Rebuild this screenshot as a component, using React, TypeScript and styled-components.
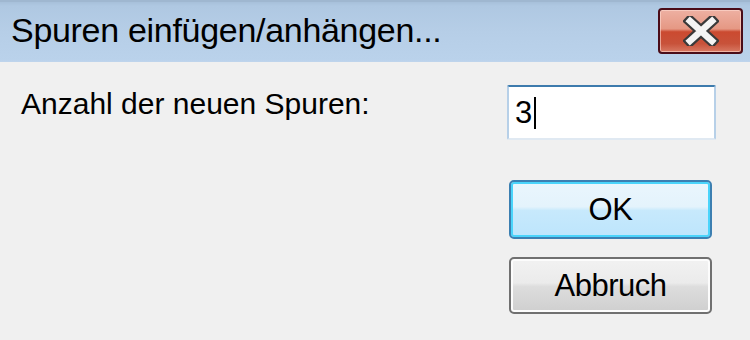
import styled, { createGlobalStyle } from 'styled-components';

const GlobalStyle = createGlobalStyle`
  html, body {
    margin: 0;
    padding: 0;
    background: #f0f0f0;
  }
  body {
    font-family: "Liberation Sans", Arial, sans-serif;
  }
`;

const Window = styled.div`
  width: 750px;
  height: 340px;
  background: #f0f0f0;
  display: flex;
  flex-direction: column;
  overflow: hidden;
`;

const TitleBar = styled.div`
  height: 62px;
  flex-shrink: 0;
  display: flex;
  align-items: center;
  justify-content: space-between;
  padding: 0 7px 0 11px;
  box-sizing: border-box;
  background: linear-gradient(#a7c0da 0px, #afc8e2 4px, #b6cee7 30px, #bad2eb 58px, #c4d8ee 62px);
  border-top: 2px solid #9fb7d0;
`;

const Title = styled.span`
  font-size: 34px;
  color: #000;
  letter-spacing: -0.3px;
  margin-top: -4px;
`;

const CloseButton = styled.div`
  width: 85px;
  height: 46px;
  margin-top: -2px;
  box-sizing: border-box;
  border: 2px solid #4a0c18;
  border-radius: 4px;
  background: linear-gradient(#eeb0a2 0%, #e59884 45%, #cb4a30 52%, #c8523a 80%, #d87a64 100%);
  box-shadow: inset 0 0 0 1px rgba(255, 220, 210, 0.6);
  display: flex;
  align-items: center;
  justify-content: center;
`;

const Body = styled.div`
  flex: 1;
  display: flex;
  flex-direction: column;
  padding-top: 23px;
`;

const FieldRow = styled.div`
  display: flex;
  align-items: flex-start;
  justify-content: space-between;
  padding: 0 34px 0 21px;
`;

const Label = styled.label`
  font-size: 30px;
  color: #000;
  margin-top: 2px;
`;

const Input = styled.div`
  width: 209px;
  height: 55px;
  box-sizing: border-box;
  background: #fff;
  border: 2px solid #b7d0e8;
  border-top-color: #3d7bad;
  border-bottom-color: #e0e9f2;
  border-radius: 2px;
  display: flex;
  align-items: center;
  padding-left: 6px;
  font-size: 31px;
  color: #000;
`;

const Caret = styled.span`
  display: inline-block;
  width: 2px;
  height: 32px;
  background: #000;
  margin-left: 2px;
`;

const ButtonColumn = styled.div`
  display: flex;
  flex-direction: column;
  align-items: flex-end;
  gap: 18px;
  padding-right: 38px;
  margin-top: 40px;
`;

const Button = styled.div<{ $default?: boolean }>`
  width: 203px;
  height: ${({ $default }) => ($default ? 59 : 57)}px;
  box-sizing: border-box;
  border-radius: 5px;
  border: 2px solid ${({ $default }) => ($default ? '#3c7fb1' : '#707070')};
  background: ${({ $default }) =>
    $default
      ? 'linear-gradient(#eaf6fd 0%, #e4f3fc 45%, #c7e9fc 52%, #bde5fc 100%)'
      : 'linear-gradient(#f2f2f2 0%, #ebebeb 45%, #dddddd 52%, #cfcfcf 100%)'};
  box-shadow: ${({ $default }) =>
    $default ? 'inset 0 0 0 2px #4ad4fb' : 'inset 0 0 0 2px #fcfcfc'};
  display: flex;
  align-items: center;
  justify-content: center;
  font-size: 31px;
  letter-spacing: -0.5px;
  color: #000;
`;

const CloseGlyph = () => (
  <svg width="36" height="30" viewBox="0 0 36 30">
    <path d="M7 5 L29 25 M29 5 L7 25" stroke="#3a3a3a" strokeWidth="11" strokeLinecap="square" />
    <path d="M7 5 L29 25 M29 5 L7 25" stroke="#f4f4f4" strokeWidth="6.5" strokeLinecap="square" />
  </svg>
);

export default function App() {
  return (
    <>
      <GlobalStyle />
      <Window>
        <TitleBar>
          <Title>Spuren einfügen/anhängen...</Title>
          <CloseButton>
            <CloseGlyph />
          </CloseButton>
        </TitleBar>
        <Body>
          <FieldRow>
            <Label>Anzahl der neuen Spuren:</Label>
            <Input>
              3<Caret />
            </Input>
          </FieldRow>
          <ButtonColumn>
            <Button $default>OK</Button>
            <Button>Abbruch</Button>
          </ButtonColumn>
        </Body>
      </Window>
    </>
  );
}
